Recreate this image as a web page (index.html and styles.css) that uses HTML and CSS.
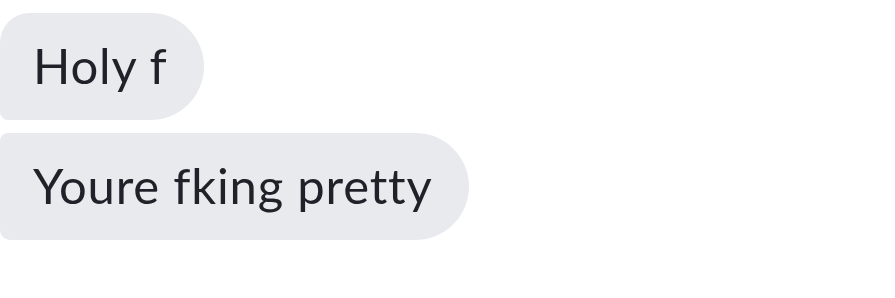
FILE: index.html
```html
<!DOCTYPE html>
<html>
<head>
<meta charset="utf-8">
<link rel="stylesheet" href="styles.css">
</head>
<body>
<div class="thread">
  <div class="bubble first">Holy f</div>
  <div class="bubble last">Youre fking pretty</div>
</div>
</body>
</html>
```
FILE: styles.css
```css
html, body {
  margin: 0;
  padding: 0;
  background: #ffffff;
}
.thread {
  display: flex;
  flex-direction: column;
  align-items: flex-start;
  gap: 13px;
  padding-top: 13px;
}
.bubble {
  box-sizing: border-box;
  height: 107px;
  display: flex;
  align-items: center;
  padding: 0 36px 2px 33px;
  background: #e9eaee;
  color: #1f2329;
  font-family: "Lato", "Open Sans", sans-serif;
  font-size: 49px;
  line-height: 1;
  letter-spacing: 0.8px;
  font-variant-ligatures: none;
  border-radius: 54px;
  white-space: nowrap;
}
.first {
  border-radius: 30px 54px 54px 8px;
}
.last {
  border-radius: 8px 54px 54px 10px;
}
```
